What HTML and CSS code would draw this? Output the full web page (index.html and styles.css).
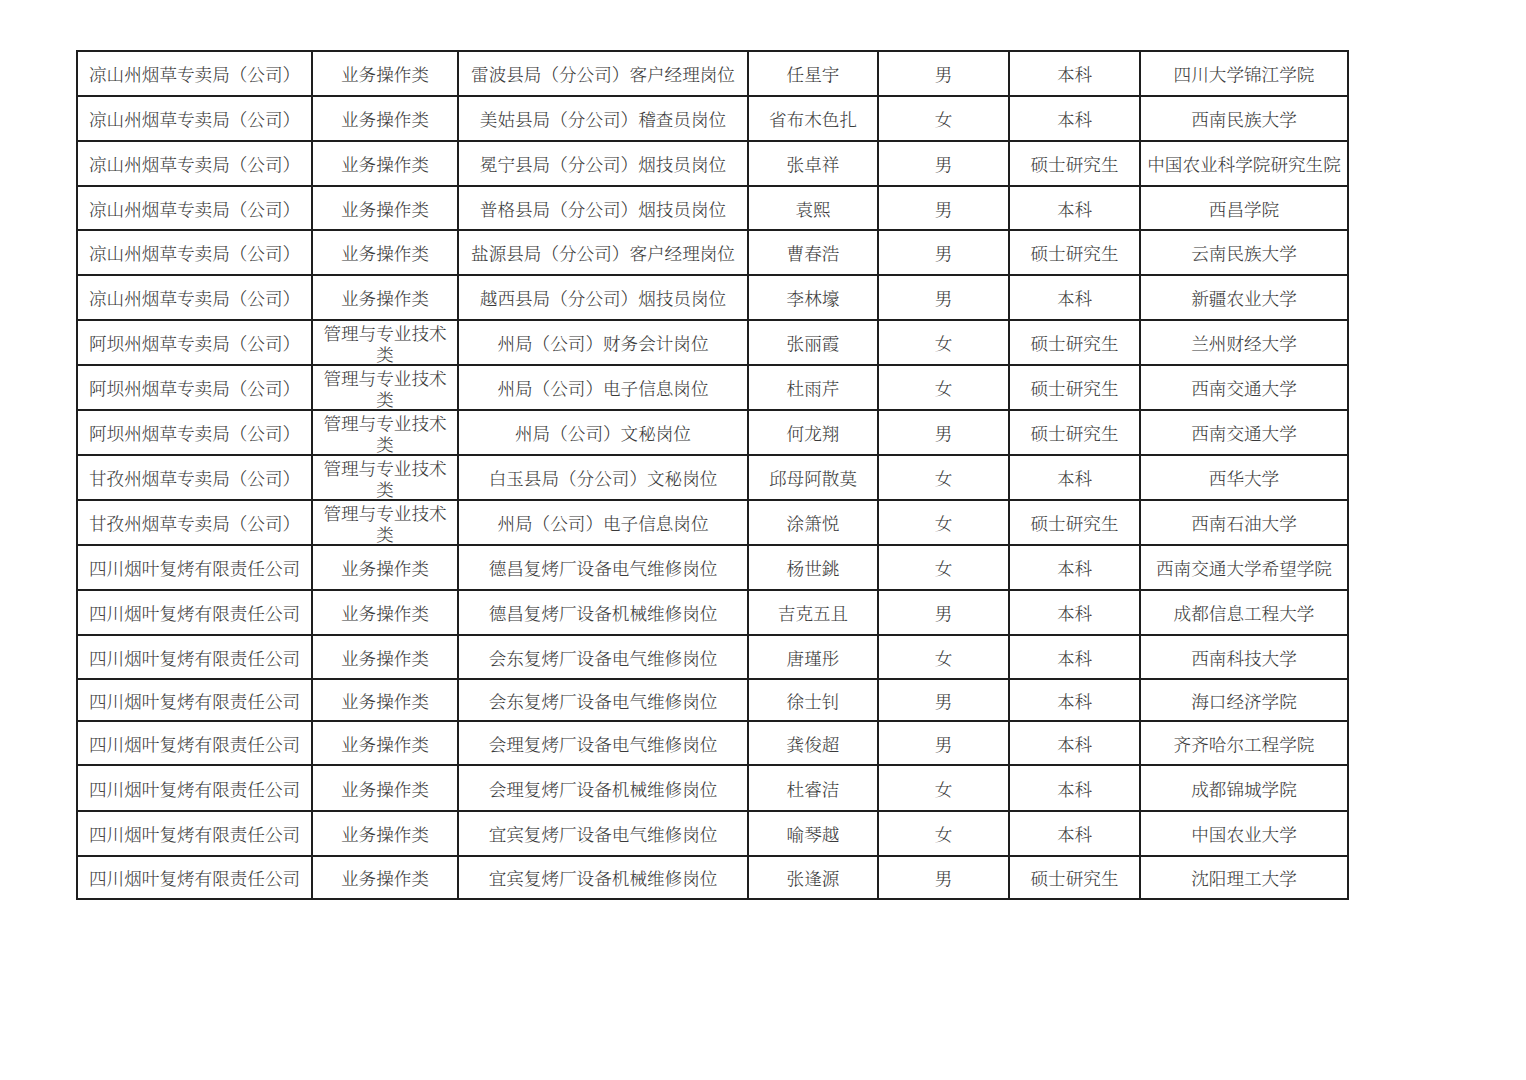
FILE: index.html
```html
<!DOCTYPE html>
<html lang="zh-CN">
<head>
<meta charset="utf-8">
<title>录用名单</title>
<link rel="stylesheet" href="styles.css">
</head>
<body>
<table class="roster">
  <colgroup>
    <col class="c-unit"><col class="c-type"><col class="c-post"><col class="c-name"><col class="c-sex"><col class="c-edu"><col class="c-school">
  </colgroup>
  <tbody>
    <tr class="h45"><td class="unit">凉山州烟草专卖局（公司）</td><td>业务操作类</td><td>雷波县局（分公司）客户经理岗位</td><td>任星宇</td><td>男</td><td>本科</td><td>四川大学锦江学院</td></tr>
    <tr class="h45"><td class="unit">凉山州烟草专卖局（公司）</td><td>业务操作类</td><td>美姑县局（分公司）稽查员岗位</td><td>省布木色扎</td><td>女</td><td>本科</td><td>西南民族大学</td></tr>
    <tr class="h45"><td class="unit">凉山州烟草专卖局（公司）</td><td>业务操作类</td><td>冕宁县局（分公司）烟技员岗位</td><td>张卓祥</td><td>男</td><td>硕士研究生</td><td>中国农业科学院研究生院</td></tr>
    <tr class="h44"><td class="unit">凉山州烟草专卖局（公司）</td><td>业务操作类</td><td>普格县局（分公司）烟技员岗位</td><td>袁熙</td><td>男</td><td>本科</td><td>西昌学院</td></tr>
    <tr class="h45"><td class="unit">凉山州烟草专卖局（公司）</td><td>业务操作类</td><td>盐源县局（分公司）客户经理岗位</td><td>曹春浩</td><td>男</td><td>硕士研究生</td><td>云南民族大学</td></tr>
    <tr class="h45"><td class="unit">凉山州烟草专卖局（公司）</td><td>业务操作类</td><td>越西县局（分公司）烟技员岗位</td><td>李林壕</td><td>男</td><td>本科</td><td>新疆农业大学</td></tr>
    <tr class="h45"><td class="unit">阿坝州烟草专卖局（公司）</td><td class="wrap">管理与专业技术类</td><td>州局（公司）财务会计岗位</td><td>张丽霞</td><td>女</td><td>硕士研究生</td><td>兰州财经大学</td></tr>
    <tr class="h45"><td class="unit">阿坝州烟草专卖局（公司）</td><td class="wrap">管理与专业技术类</td><td>州局（公司）电子信息岗位</td><td>杜雨芹</td><td>女</td><td>硕士研究生</td><td>西南交通大学</td></tr>
    <tr class="h45"><td class="unit">阿坝州烟草专卖局（公司）</td><td class="wrap">管理与专业技术类</td><td>州局（公司）文秘岗位</td><td>何龙翔</td><td>男</td><td>硕士研究生</td><td>西南交通大学</td></tr>
    <tr class="h45"><td class="unit">甘孜州烟草专卖局（公司）</td><td class="wrap">管理与专业技术类</td><td>白玉县局（分公司）文秘岗位</td><td>邱母阿散莫</td><td>女</td><td>本科</td><td>西华大学</td></tr>
    <tr class="h45"><td class="unit">甘孜州烟草专卖局（公司）</td><td class="wrap">管理与专业技术类</td><td>州局（公司）电子信息岗位</td><td>涂箫悦</td><td>女</td><td>硕士研究生</td><td>西南石油大学</td></tr>
    <tr class="h45"><td class="unit">四川烟叶复烤有限责任公司</td><td>业务操作类</td><td>德昌复烤厂设备电气维修岗位</td><td>杨世銚</td><td>女</td><td>本科</td><td>西南交通大学希望学院</td></tr>
    <tr class="h45"><td class="unit">四川烟叶复烤有限责任公司</td><td>业务操作类</td><td>德昌复烤厂设备机械维修岗位</td><td>吉克五且</td><td>男</td><td>本科</td><td>成都信息工程大学</td></tr>
    <tr class="h44"><td class="unit">四川烟叶复烤有限责任公司</td><td>业务操作类</td><td>会东复烤厂设备电气维修岗位</td><td>唐瑾彤</td><td>女</td><td>本科</td><td>西南科技大学</td></tr>
    <tr class="h42"><td class="unit">四川烟叶复烤有限责任公司</td><td>业务操作类</td><td>会东复烤厂设备电气维修岗位</td><td>徐士钊</td><td>男</td><td>本科</td><td>海口经济学院</td></tr>
    <tr class="h44"><td class="unit">四川烟叶复烤有限责任公司</td><td>业务操作类</td><td>会理复烤厂设备电气维修岗位</td><td>龚俊超</td><td>男</td><td>本科</td><td>齐齐哈尔工程学院</td></tr>
    <tr class="h46"><td class="unit">四川烟叶复烤有限责任公司</td><td>业务操作类</td><td>会理复烤厂设备机械维修岗位</td><td>杜睿洁</td><td>女</td><td>本科</td><td>成都锦城学院</td></tr>
    <tr class="h45"><td class="unit">四川烟叶复烤有限责任公司</td><td>业务操作类</td><td>宜宾复烤厂设备电气维修岗位</td><td>喻琴越</td><td>女</td><td>本科</td><td>中国农业大学</td></tr>
    <tr class="h43"><td class="unit">四川烟叶复烤有限责任公司</td><td>业务操作类</td><td>宜宾复烤厂设备机械维修岗位</td><td>张逢源</td><td>男</td><td>硕士研究生</td><td>沈阳理工大学</td></tr>
  </tbody>
</table>
</body>
</html>
```

FILE: styles.css
```css
html, body {
  margin: 0;
  padding: 0;
  background: #ffffff;
}

body {
  padding: 50px 0 0 76px;
  font-family: "Noto Serif CJK SC", "Noto Sans CJK SC", "Liberation Serif", serif;
  font-size: 17.6px;
  font-weight: 300;
  color: #3a3a3a;
}

.roster {
  border-collapse: collapse;
  table-layout: fixed;
  width: 1272px;
}

.c-unit { width: 235px; }
.c-type { width: 146px; }
.c-post { width: 290px; }
.c-name { width: 130px; }
.c-sex { width: 131px; }
.c-edu { width: 131px; }
.c-school { width: 208px; }

.roster td {
  border: 2px solid #1e1e1e;
  padding: 0 4px;
  text-align: center;
  vertical-align: middle;
  white-space: nowrap;
  line-height: 21px;
  overflow: hidden;
}

.roster td.unit {
  text-align: left;
  padding-left: 11px;
}

.roster td.wrap {
  white-space: normal;
  padding: 0 8px;
  line-height: 21px;
}

.h42 { height: 42px; }
.h43 { height: 43px; }
.h44 { height: 44px; }
.h45 { height: 45px; }
.h46 { height: 46px; }
```
